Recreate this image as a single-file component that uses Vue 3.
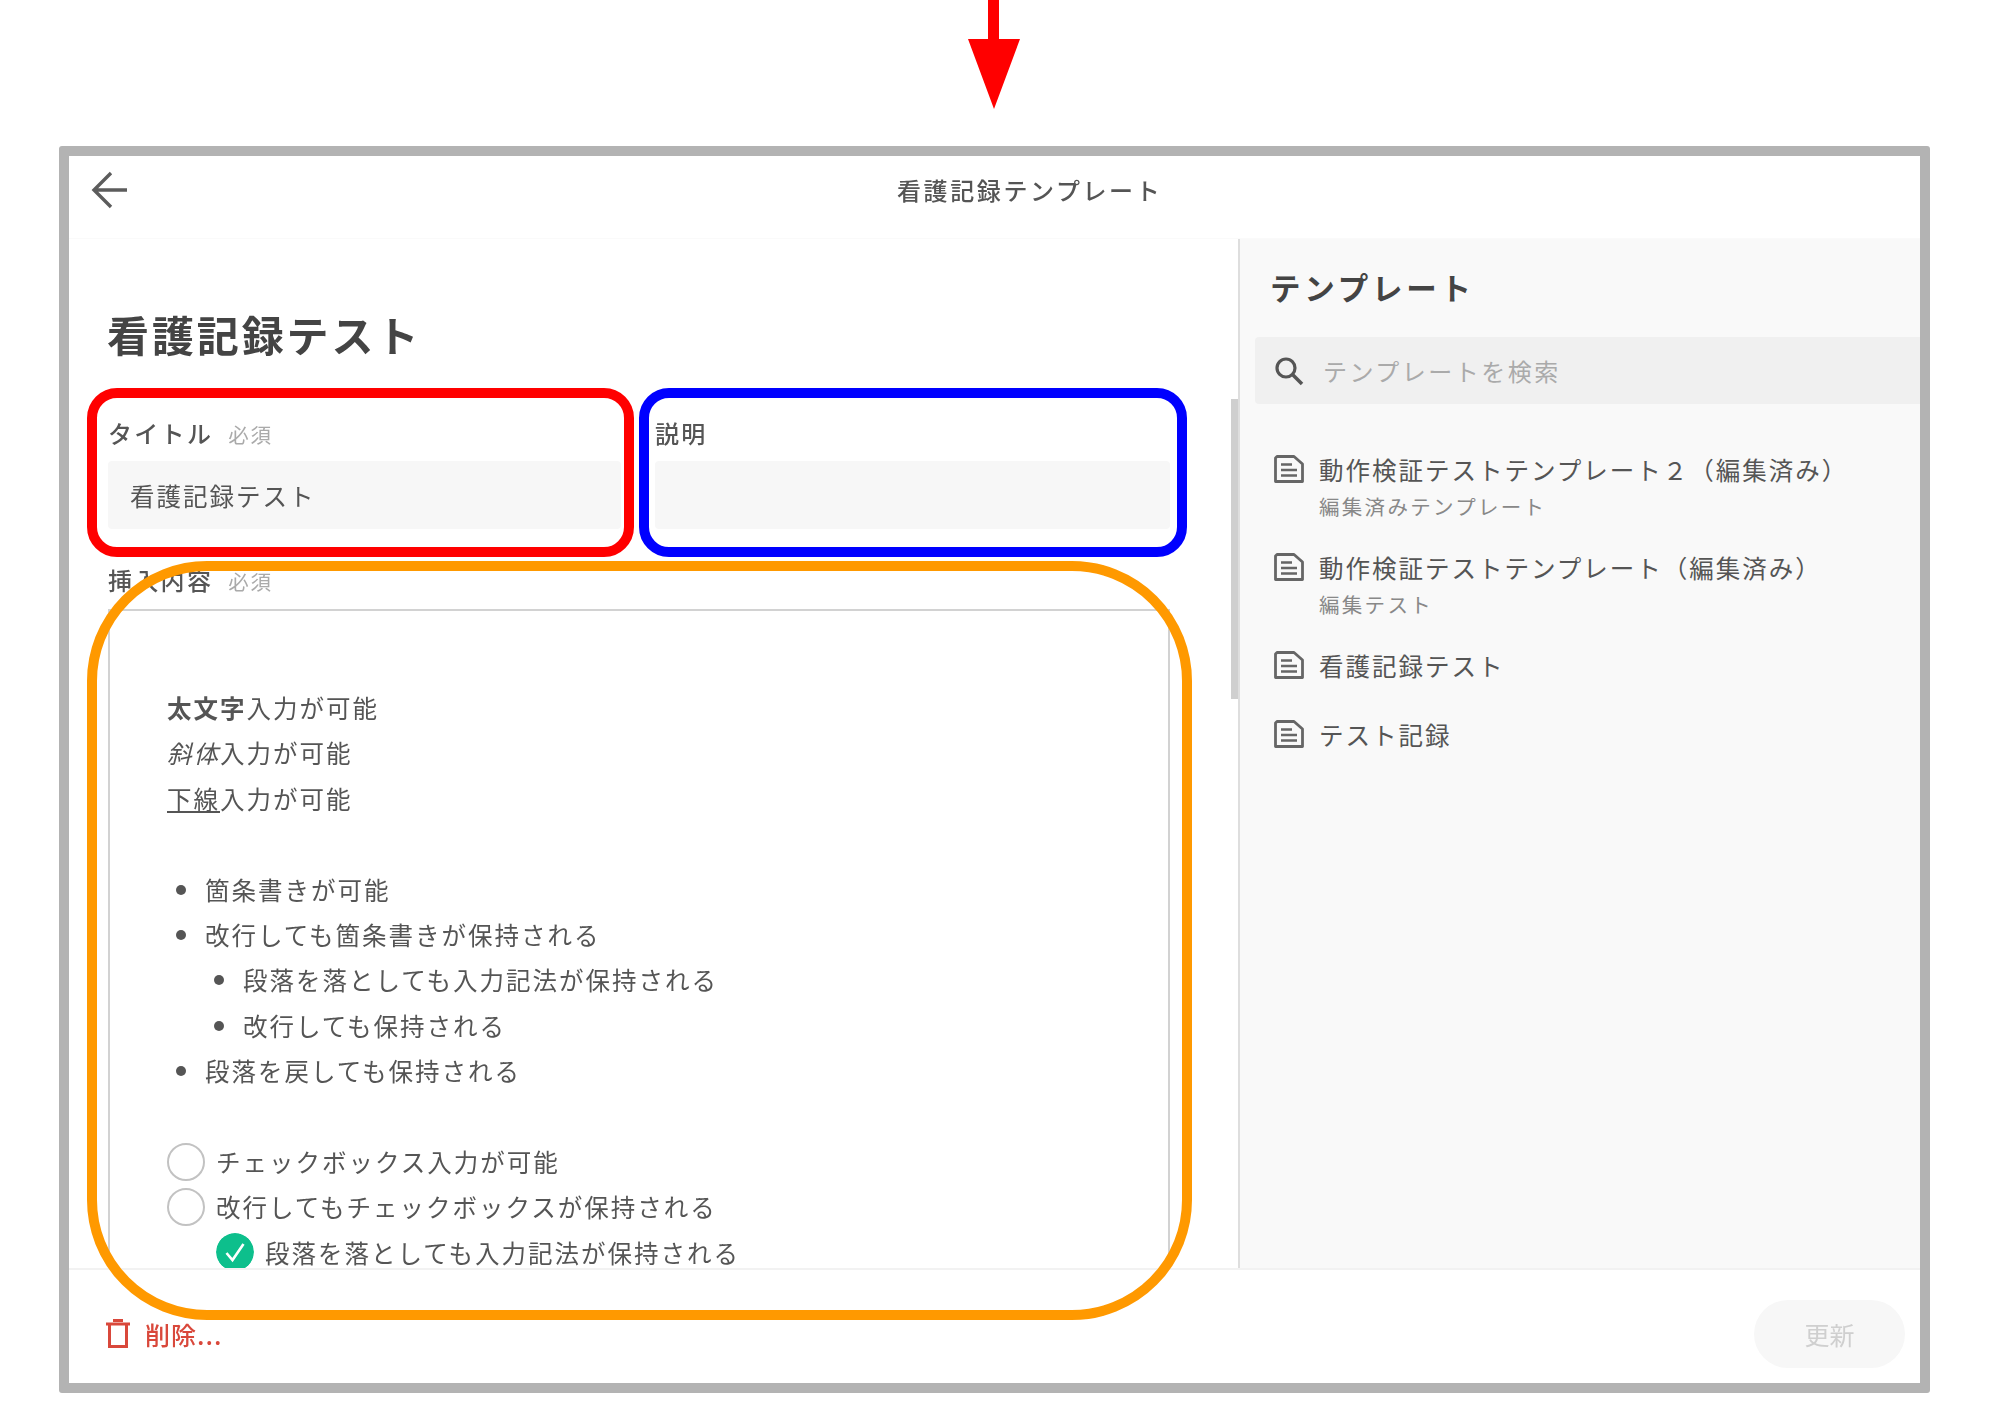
<template>
  <div class="page">
    <div class="arrow-row">
      <svg width="52" height="110" viewBox="0 0 52 110">
        <path d="M20 0H31V39H52L26 109L0 39H20Z" fill="#ff0000" />
      </svg>
    </div>

    <div class="frame">
      <header class="topbar">
        <svg class="back" width="40" height="40" viewBox="0 0 40 40">
          <path d="M37 20H5M21 3L4 20L21 37" fill="none" stroke="#5c5c5c" stroke-width="3.4" />
        </svg>
        <div class="topbar-title">看護記録テンプレート</div>
      </header>

      <div class="body">
        <main class="form">
          <h1 class="page-title">看護記録テスト</h1>

          <div class="fields">
            <div class="field">
              <div class="label">タイトル<span class="required">必須</span></div>
              <div class="input">看護記録テスト</div>
            </div>
            <div class="field">
              <div class="label">説明</div>
              <div class="input"></div>
            </div>
          </div>

          <div class="label content-label">挿入内容<span class="required">必須</span></div>
          <div class="editor">
            <p><b>太文字</b>入力が可能</p>
            <p><i>斜体</i>入力が可能</p>
            <p><u>下線</u>入力が可能</p>
            <p class="blank"></p>
            <ul>
              <li>箇条書きが可能</li>
              <li>改行しても箇条書きが保持される
                <ul>
                  <li>段落を落としても入力記法が保持される</li>
                  <li>改行しても保持される</li>
                </ul>
              </li>
              <li>段落を戻しても保持される</li>
            </ul>
            <p class="blank"></p>
            <div v-for="item in checks" :key="item.text" class="check" :class="{ nested: item.nested }">
              <svg v-if="item.done" class="mark" viewBox="0 0 38 38">
                <circle cx="19" cy="19" r="19" fill="#0dbf8c" />
                <path d="M10.500 20L16.500 27L27.500 11" fill="none" stroke="#fff" stroke-width="2.600" />
              </svg>
              <span v-else class="circle"></span>
              {{ item.text }}
            </div>
          </div>

          <span class="scrollbar"></span>
        </main>

        <aside class="sidebar">
          <h2 class="sidebar-title">テンプレート</h2>
          <div class="search">
            <svg width="30" height="30" viewBox="0 0 30 30">
              <circle cx="12" cy="12" r="9" fill="none" stroke="#555" stroke-width="3.200" />
              <path d="M18.500 18.500L28 28" stroke="#555" stroke-width="3.600" />
            </svg>
            <span>テンプレートを検索</span>
          </div>
          <ul class="templates">
            <li v-for="t in templates" :key="t.name">
              <svg class="doc" width="30" height="28" viewBox="0 0 30 28">
                <path d="M3 1.500H20L28.500 9V26.500H1.500V3Z" fill="none" stroke="#666" stroke-width="2.800" stroke-linejoin="round" />
                <path d="M7 9.500H18M7 15H23M7 20.500H23" stroke="#666" stroke-width="2.400" />
              </svg>
              <div>
                <div class="t-name">{{ t.name }}</div>
                <div v-if="t.sub" class="t-sub">{{ t.sub }}</div>
              </div>
            </li>
          </ul>
        </aside>
      </div>

      <footer class="footer">
        <button class="delete">
          <svg width="24" height="29" viewBox="0 0 24 29">
            <path d="M0 5H24M7 1.500H17M3.500 5V27.500H20.500V5" fill="none" stroke="#d9483b" stroke-width="3" />
          </svg>
          削除...
        </button>
        <button class="update" disabled>更新</button>
      </footer>

      <span class="mark-box red"></span>
      <span class="mark-box blue"></span>
      <span class="mark-box orange"></span>
    </div>
  </div>
</template>

<script setup>
const checks = [
  { text: 'チェックボックス入力が可能' },
  { text: '改行してもチェックボックスが保持される' },
  { text: '段落を落としても入力記法が保持される', nested: true, done: true }
]

const templates = [
  { name: '動作検証テストテンプレート２（編集済み）', sub: '編集済みテンプレート' },
  { name: '動作検証テストテンプレート（編集済み）', sub: '編集テスト' },
  { name: '看護記録テスト' },
  { name: 'テスト記録' }
]
</script>

<style>
html,
body {
  background: #fff;
}
</style>

<style scoped>
.page {
  width: 2000px;
  height: 1407px;
  overflow: hidden;
  font-family: "Noto Sans CJK JP", "Liberation Sans", sans-serif;
  color: #555;
  /* the reference is an upscaled capture, so everything is a little soft */
  filter: blur(0.5px);
}

.arrow-row {
  height: 146px;
  padding-left: 968px;
  box-sizing: border-box;
}

.arrow-row svg {
  display: block;
}

.frame {
  position: relative;
  width: 1871px;
  height: 1247px;
  margin-left: 59px;
  box-sizing: border-box;
  border: 10px solid #b3b3b3;
  border-radius: 3px;
  display: flex;
  flex-direction: column;
}

.topbar {
  height: 82px;
  flex: none;
  position: relative;
  display: flex;
  align-items: center;
  padding-left: 21px;
  box-sizing: border-box;
}

.back {
  margin-top: -15px;
}

.topbar-title {
  position: absolute;
  left: 828px;
  top: 14px;
  font-size: 24px;
  letter-spacing: 2.600px;
  font-weight: 500;
  line-height: 40px;
}

.body {
  flex: 1;
  min-height: 0;
  display: flex;
  border-top: 1px solid #fafafa;
}

.form {
  width: 1171px;
  flex: none;
  position: relative;
  box-sizing: border-box;
  padding: 65px 0 0 39px;
  border-right: 2px solid #dedede;
  overflow: hidden;
}

.page-title {
  margin: 0 0 0 -1px;
  font-size: 42px;
  letter-spacing: 2.900px;
  line-height: 60px;
  font-weight: 700;
  color: #444;
}

.fields {
  display: flex;
  gap: 34px;
  margin-top: 51px;
  width: 1062px;
}

.field {
  flex: none;
  width: 513px;
}

.field + .field {
  width: 515px;
}

.label {
  font-size: 24px;
  letter-spacing: 2.300px;
  line-height: 36px;
  font-weight: 500;
  height: 36px;
}

.required {
  margin-left: 15px;
  font-size: 20.500px;
  letter-spacing: 1.800px;
  font-weight: 400;
  color: #aaa;
}

.input {
  height: 68px;
  margin-top: 10px;
  padding: 0 22px;
  box-sizing: border-box;
  background: #f7f7f7;
  border-radius: 4px;
  font-size: 24.500px;
  letter-spacing: 2px;
  line-height: 70px;
}

.content-label {
  margin-top: 33px;
}

.editor {
  width: 1062px;
  height: 700px;
  margin-top: 11px;
  padding: 74px 57px 0;
  box-sizing: border-box;
  border: 2px solid #d2d2d2;
  border-bottom: none;
  font-size: 24.500px;
  letter-spacing: 2px;
  line-height: 45.400px;
  overflow: hidden;
}

.editor p {
  margin: 0;
  height: 45.400px;
}

.editor ul {
  margin: 0;
  padding-left: 38px;
  list-style: none;
}

.editor li {
  position: relative;
}

.editor li::before {
  content: "";
  position: absolute;
  left: -29px;
  top: 18px;
  width: 10px;
  height: 10px;
  border-radius: 50%;
  background: #555;
}

.check {
  display: flex;
  align-items: center;
  gap: 11px;
  height: 45.400px;
}

.check.nested {
  margin-left: 49px;
}

.circle,
.mark {
  flex: none;
  width: 38px;
  height: 38px;
  box-sizing: border-box;
  border-radius: 50%;
}

.circle {
  border: 2px solid #c2c2c2;
}

.scrollbar {
  position: absolute;
  right: 0;
  top: 160px;
  width: 7px;
  height: 300px;
  background: #cfcfcf;
}

.sidebar {
  flex: 1;
  min-width: 0;
  background: #f9f9f9;
  padding-top: 23px;
  overflow: hidden;
}

.sidebar-title {
  margin: 0 0 0 30px;
  font-size: 30.500px;
  letter-spacing: 3.800px;
  line-height: 50px;
  font-weight: 700;
  color: #444;
}

.search {
  display: flex;
  align-items: center;
  gap: 19px;
  height: 67px;
  margin: 25px 0 0 15px;
  padding-left: 19px;
  background: #f0f0f0;
  border-radius: 4px 0 0 4px;
  font-size: 24px;
  letter-spacing: 2.500px;
  color: #aaa;
}

.templates {
  list-style: none;
  margin: 43px 0 0;
  padding: 0 0 0 34px;
}

.templates li {
  display: flex;
  gap: 15px;
  margin-bottom: 24px;
}

.doc {
  flex: none;
  margin-top: 8px;
}

.t-name {
  font-size: 24.500px;
  letter-spacing: 2px;
  line-height: 45px;
}

.t-sub {
  font-size: 20.500px;
  letter-spacing: 2.300px;
  line-height: 29px;
  color: #888;
}

.footer {
  height: 115px;
  flex: none;
  box-sizing: border-box;
  border-top: 2px solid #f2f2f2;
  padding: 14px 15px 0 37px;
  display: flex;
  align-items: center;
  justify-content: space-between;
}

.footer button {
  font: inherit;
  border: none;
  background: none;
  padding: 0;
}

.delete {
  display: flex;
  align-items: center;
  gap: 15px;
  font-size: 25px !important;
  font-weight: 500 !important;
  letter-spacing: 1px;
  color: #d9483b;
}

.update {
  width: 151px;
  height: 68px;
  border-radius: 34px;
  background: #f7f7f7 !important;
  font-size: 25px !important;
  color: #cfcfcf;
}

.mark-box {
  position: absolute;
  box-sizing: border-box;
  border-style: solid;
  border-width: 10px;
}

.red {
  left: 18px;
  top: 232px;
  width: 547px;
  height: 169px;
  border-color: #ff0000;
  border-radius: 30px;
}

.blue {
  left: 570px;
  top: 232px;
  width: 548px;
  height: 169px;
  border-color: #0000ff;
  border-radius: 30px;
}

.orange {
  left: 18px;
  top: 405px;
  width: 1105px;
  height: 759px;
  border-color: #ff9900;
  border-radius: 120px;
}
</style>
